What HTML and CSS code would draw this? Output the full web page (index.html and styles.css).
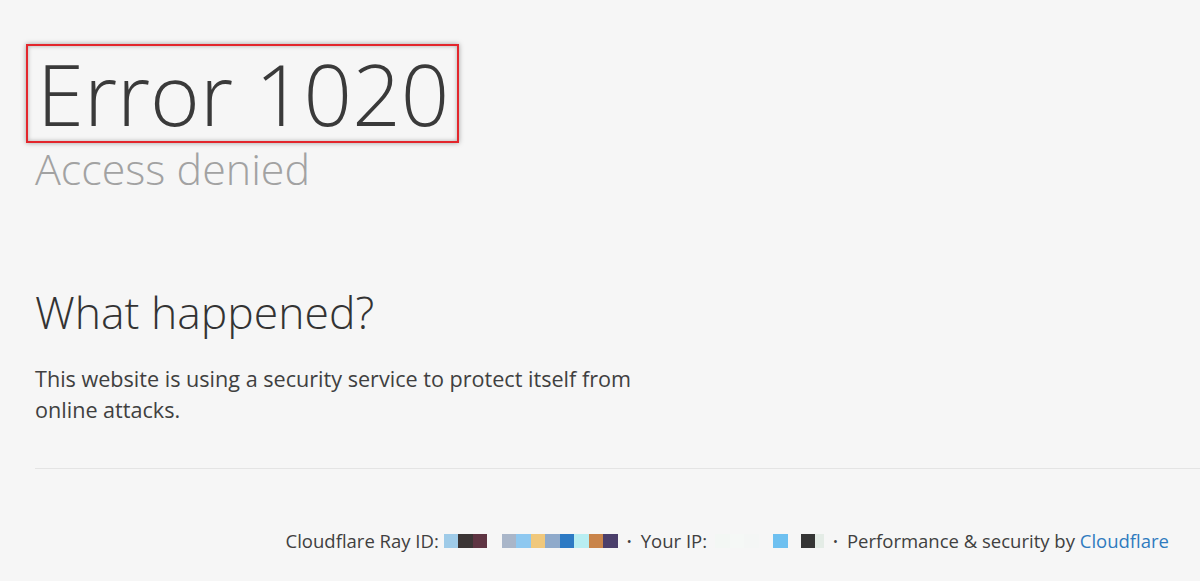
FILE: index.html
```html
<!DOCTYPE html>
<html lang="en">
<head>
    <meta charset="UTF-8">
    <title>Access denied | Cloudflare</title>
    <meta name="viewport" content="width=device-width, initial-scale=1.0">
    <link rel="stylesheet" href="styles.css">
</head>
<body>

<div class="page">
    <!-- Error header -->
    <header class="error-header">
        <h1 class="error-code">Error 1020</h1>
        <h2 class="error-title">Access denied</h2>
    </header>

    <!-- Explanation -->
    <section class="what">
        <h2>What happened?</h2>
        <p>This website is using a security service to protect itself from online attacks.</p>
    </section>

    <div class="divider"></div>

    <!-- Footer -->
    <footer class="footer">
        <span>Cloudflare Ray ID:</span>
        <span class="redact">
            <i class="px" style="background:#9fcbe8"></i><i class="px" style="background:#3b3535"></i><i class="px" style="background:#5e3442"></i><i class="px gap"></i><i class="px" style="background:#a9b6c9"></i><i class="px" style="background:#8ec8f0"></i><i class="px" style="background:#f0c87c"></i><i class="px" style="background:#8faacb"></i><i class="px" style="background:#2d7ac4"></i><i class="px" style="background:#b8eef2"></i><i class="px" style="background:#c9844a"></i><i class="px" style="background:#4b3f6b"></i>
        </span>
        <span class="dot">&bull;</span>
        <span>Your IP:</span>
        <span class="redact ip">
            <i class="px" style="background:#f3f7f4"></i><i class="px" style="background:#f5f8f6"></i><i class="px" style="background:#f4f6f5"></i><i class="px gap"></i><i class="px" style="background:#6ec0f0"></i><i class="px gap-sm"></i><i class="px" style="background:#353535"></i><i class="px narrow" style="background:#e4ece6"></i>
        </span>
        <span class="dot">&bull;</span>
        <span>Performance &amp; security by <a href="#">Cloudflare</a></span>
    </footer>
</div>

</body>
</html>
```

FILE: styles.css
```css
* {
    box-sizing: border-box;
}

body {
    font-family: 'Open Sans', 'Noto Sans', sans-serif;
    background-color: #f6f6f6;
    margin: 0;
    padding: 0;
    color: #333;
}

.page {
    padding: 44px 0 0 35px;
}

.error-header {
    margin: 0;
}

.error-code {
    display: inline-block;
    margin: 0 0 0 -9px;
    padding: 0 8px 0 9px;
    font-size: 85px;
    font-weight: 300;
    line-height: 95px;
    color: #3a3a3a;
    border: 2px solid #e3262c;
    box-shadow: 0 0 5px rgba(0,0,0,0.35), inset 0 0 4px rgba(0,0,0,0.3);
}

.error-title {
    margin: 5px 0 0 0;
    font-size: 43px;
    font-weight: 300;
    line-height: 42px;
    color: #a2a2a2;
}

.what {
    margin-top: 100px;
}

.what h2 {
    margin: 0;
    font-size: 44.5px;
    font-weight: 300;
    line-height: 44px;
    color: #333;
}

.what p {
    margin: 29px 0 0 0;
    width: 650px;
    font-size: 21.6px;
    line-height: 31px;
    color: #404040;
}

.divider {
    margin-top: 43px;
    border-top: 1px solid #e4e4e4;
}

.footer {
    display: flex;
    justify-content: flex-end;
    align-items: center;
    padding: 59px 31px 0 0;
    font-size: 18.5px;
    color: #404040;
}

.footer a {
    color: #2f7bbf;
    text-decoration: none;
}

.redact {
    display: flex;
    margin-left: 5px;
}

.redact.ip {
    margin-left: 8px;
}

.px {
    display: block;
    width: 14.5px;
    height: 14px;
}

.px.gap {
    background: transparent;
}

.px.gap-sm {
    width: 13px;
}

.px.narrow {
    width: 9px;
}

.dot {
    margin: 0 9px;
    font-size: 13px;
}
```
